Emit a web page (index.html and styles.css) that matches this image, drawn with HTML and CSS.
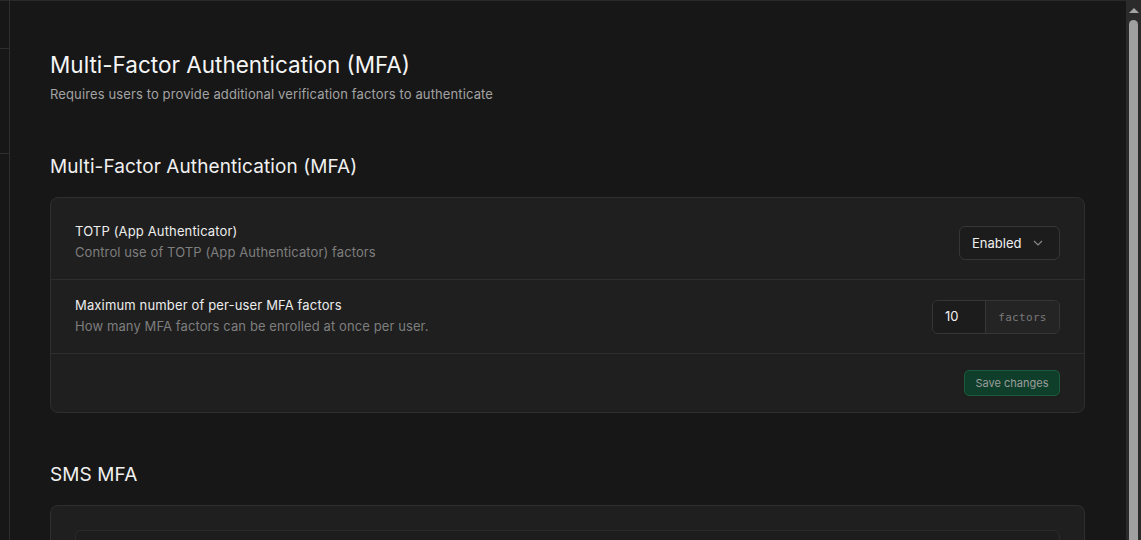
FILE: index.html
```html
<!DOCTYPE html>
<html>
<head>
<meta charset="utf-8">
<link rel="stylesheet" href="styles.css">
</head>
<body>
<div class="app">
  <aside class="rail">
    <div class="rail-block rail-top"></div>
    <div class="rail-block rail-mid"></div>
    <div class="rail-block"></div>
  </aside>
  <main class="main">
    <header class="page-head">
      <h1 class="page-title">Multi-Factor Authentication (MFA)</h1>
      <p class="page-sub">Requires users to provide additional verification factors to authenticate</p>
    </header>

    <section class="section">
      <h2 class="section-title">Multi-Factor Authentication (MFA)</h2>
      <div class="card">
        <div class="row row-a">
          <div class="row-text">
            <div class="row-label">TOTP (App Authenticator)</div>
            <div class="row-desc">Control use of TOTP (App Authenticator) factors</div>
          </div>
          <button class="select">
            <span>Enabled</span>
            <svg class="chev" width="10" height="10" viewBox="0 0 10 10"><path d="M1 3 L5 7 L9 3" fill="none" stroke="#8a8a8a" stroke-width="1.1"/></svg>
          </button>
        </div>
        <div class="row row-b">
          <div class="row-text">
            <div class="row-label">Maximum number of per-user MFA factors</div>
            <div class="row-desc">How many MFA factors can be enrolled at once per user.</div>
          </div>
          <div class="input-group">
            <span class="input-val">10</span>
            <span class="input-addon">factors</span>
          </div>
        </div>
        <div class="card-foot">
          <button class="btn-save">Save changes</button>
        </div>
      </div>
    </section>

    <section class="section section-sms">
      <h2 class="section-title">SMS MFA</h2>
      <div class="card card-sms">
        <div class="inner-box"></div>
      </div>
    </section>
  </main>
  <div class="scrollbar">
    <div class="sb-arrow"></div>
    <div class="sb-thumb"></div>
  </div>
</div>
</body>
</html>
```

FILE: styles.css
```css
* { box-sizing: border-box; }
html, body { margin: 0; padding: 0; height: 100%; overflow: hidden; }
body {
  background: #171717;
  font-family: Inter, "Noto Sans", sans-serif;
  color: #ededed;
}
.app {
  display: flex;
  height: 540px;
  border-top: 1px solid #2a2a2a;
}
.rail {
  width: 10px;
  flex: none;
  border-right: 1px solid #2e2e2e;
  display: flex;
  flex-direction: column;
}
.rail-block { border-bottom: 1px solid #2e2e2e; }
.rail-top { height: 48px; }
.rail-mid { height: 105px; }
.rail-block:last-child { border-bottom: none; flex: 1; }

.main {
  flex: 1;
  padding: 51px 41px 0 40px;
  overflow: hidden;
}
.page-title {
  margin: 0;
  font-size: 22.5px;
  font-weight: 400;
  line-height: 26px;
  color: #f5f5f5;
}
.page-sub {
  margin: 7px 0 0;
  font-size: 13px;
  line-height: 18px;
  letter-spacing: 0.12px;
  color: #a3a3a3;
}
.section { margin-top: 52px; }
.section-title {
  margin: 0 0 18px;
  font-size: 19px;
  font-weight: 400;
  line-height: 24px;
  letter-spacing: 0.1px;
  color: #f0f0f0;
}
.card {
  background: #1f1f1f;
  border: 1px solid #2e2e2e;
  border-radius: 8px;
}
.row {
  display: flex;
  align-items: flex-start;
  justify-content: space-between;
  padding: 0 24px;
  border-bottom: 1px solid #2e2e2e;
}
.row-a { height: 82px; padding-top: 23px; }
.row-a .select { margin-top: 5px; }
.row-b { height: 74px; padding-top: 15px; }
.row-b .input-group { margin-top: 5px; }
.row-label { font-size: 13px; line-height: 20px; color: #ededed; letter-spacing: 0.15px; }
.row-desc { font-size: 13px; line-height: 20px; color: #7e7e7e; margin-top: 1px; letter-spacing: 0.1px; }
.select {
  display: flex;
  align-items: center;
  gap: 12px;
  height: 34px;
  width: 101px;
  padding: 0 12px;
  background: #1c1c1c;
  border: 1px solid #363636;
  border-radius: 6px;
  font-family: inherit;
  font-size: 13px;
  color: #f0f0f0;
}
.input-group {
  display: flex;
  height: 34px;
  border: 1px solid #363636;
  border-radius: 6px;
  overflow: hidden;
  font-size: 13px;
}
.input-val {
  width: 53px;
  padding: 7px 12px;
  background: #1c1c1c;
  color: #f0f0f0;
  border-right: 1px solid #363636;
}
.input-addon {
  width: 73px;
  display: flex;
  align-items: center;
  justify-content: center;
  background: #242424;
  color: #7a7a7a;
  font-family: "DejaVu Sans Mono", monospace;
  font-size: 11px;
  letter-spacing: 0.3px;
}
.card-foot {
  height: 58px;
  display: flex;
  align-items: center;
  justify-content: flex-end;
  padding: 0 24px;
}
.btn-save {
  height: 26px;
  width: 96px;
  background: #0f3f2b;
  border: 1px solid #1a5a3d;
  border-radius: 5px;
  color: #9c9c9c;
  font-family: inherit;
  font-size: 11px;
  padding: 0;
}
.section-sms { margin-top: 50px; }
.section-sms .section-title { margin-bottom: 18px; }
.card-sms {
  height: 60px;
  padding: 24px 24px 0;
  border-bottom: none;
  border-radius: 8px 8px 0 0;
}
.inner-box {
  height: 40px;
  border: 1px solid #2a2a2a;
  border-radius: 6px 6px 0 0;
  background: #1d1d1d;
}
.scrollbar {
  width: 15px;
  flex: none;
  background: #2b2b2b;
  display: flex;
  flex-direction: column;
  align-items: center;
  padding-top: 7px;
}
.sb-arrow {
  width: 0; height: 0;
  border-left: 5px solid transparent;
  border-right: 5px solid transparent;
  border-bottom: 5px solid #a3a3a3;
}
.sb-thumb {
  margin-top: 7px;
  width: 9px;
  flex: 1;
  background: #a0a0a0;
  border-radius: 5px 5px 0 0;
}
```
